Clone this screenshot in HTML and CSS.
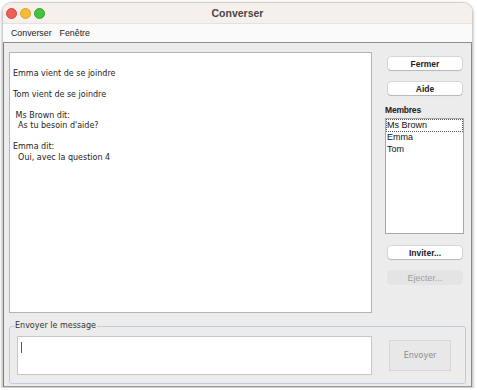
FILE: index.html
```html
<!DOCTYPE html>
<html lang="fr">
<head>
  <meta charset="UTF-8">
  <meta name="viewport" content="width=device-width, initial-scale=1.0">
  <title>Converser</title>
  <link rel="stylesheet" href="styles.css">
</head>
<body>
  <div class="window">
    <div class="titlebar">
      <div class="lights">
        <span class="light red"></span>
        <span class="light yellow"></span>
        <span class="light green"></span>
      </div>
      <div class="title">Converser</div>
    </div>
    <div class="menubar">
      <span class="menu">Converser</span>
      <span class="menu">Fenêtre</span>
    </div>
    <div class="content">
      <div class="main">
        <div class="chat">
<pre>

Emma vient de se joindre

Tom vient de se joindre

 Ms Brown dit:
  As tu besoin d'aide?

Emma dit:
  Oui, avec la question 4</pre>
        </div>
        <div class="side">
          <button class="btn">Fermer</button>
          <button class="btn">Aide</button>
          <div class="label">Membres</div>
          <ul class="members">
            <li class="focus">Ms Brown</li>
            <li>Emma</li>
            <li>Tom</li>
          </ul>
          <button class="btn">Inviter...</button>
          <button class="btn" disabled>Ejecter...</button>
        </div>
      </div>
      <fieldset class="compose">
        <legend>Envoyer le message</legend>
        <div class="input"><span class="caret"></span></div>
        <button class="send" disabled>Envoyer</button>
      </fieldset>
    </div>
  </div>
</body>
</html>
```

FILE: styles.css
```css
html, body{
  margin: 0;
  background: #fff;
}
.window{
  margin: 2px 4px 0 2px;
  width: 469px;
  border: 1px solid #cfcfcf;
  border-radius: 10px 10px 0 0;
  overflow: hidden;
  box-shadow: 0 1px 3px rgba(0,0,0,.35);
  font-family: "Liberation Sans", Arial, sans-serif;
}
.titlebar{
  height: 20px;
  background: #f6f0ed;
  border-bottom: 1px solid #e6e1de;
  display: flex;
  align-items: center;
  padding-left: 3px;
}
.lights{
  display: flex;
  gap: 3px;
}
.light{
  width: 11px;
  height: 11px;
  border-radius: 50%;
  box-sizing: border-box;
}
.red{ background: #ee5f57; border: .5px solid #d8463e; }
.yellow{ background: #f5bd36; border: .5px solid #dba12a; }
.green{ background: #45c23f; border: .5px solid #2fa62b; }
.title{
  flex: 1;
  text-align: center;
  font-weight: bold;
  font-size: 10.5px;
  color: #4b4646;
  margin-right: 42px;
}
.menubar{
  height: 18px;
  background: #fafafa;
  border-bottom: 1px solid #8d8d8d;
  display: flex;
  align-items: center;
  gap: 8px;
  padding-left: 8px;
  font-size: 8.8px;
  color: #1c1c1c;
}
.content{
  background: #ececec;
  border-left: 1px solid #7c7c7c;
  border-right: 1px solid #8a8a8a;
  border-bottom: 1px solid #9a9a9a;
  padding: 9px 6px 1px 5px;
  height: 333px;
}
.main{
  display: flex;
  gap: 13px;
}
.chat{
  box-sizing: border-box;
  width: 363px;
  height: 261px;
  background: #fff;
  border: 1px solid #b3b3b3;
  padding-left: 3px;
}
.chat pre{
  margin: 5px 0 0;
  font-family: "DejaVu Sans", Verdana, sans-serif;
  font-size: 8px;
  line-height: 10.5px;
  color: #1d1d1d;
}
.side{
  width: 79px;
  display: flex;
  flex-direction: column;
}
.btn{
  margin: 5px 2px 0 3px;
  width: 74px;
  height: 13px;
  padding: 0;
  border: none;
  border-radius: 3px;
  background: #fff;
  box-shadow: 0 0 0 .5px rgba(0,0,0,.18), 0 1px 1px rgba(0,0,0,.15);
  font-family: "Liberation Sans", Arial, sans-serif;
  font-size: 8.5px;
  font-weight: bold;
  color: #222;
}
.btn + .btn{
  margin-top: 12px;
}
.btn:disabled{
  background: #e4e4e4;
  color: #a0a0a0;
  font-weight: normal;
  font-size: 9px;
  box-shadow: 0 0 0 .5px rgba(0,0,0,.06);
}
.label{
  margin-top: 9px;
  line-height: 12px;
  font-size: 8.5px;
  font-weight: bold;
  color: #222;
  letter-spacing: -.2px;
}
.members{
  list-style: none;
  margin: 2px 0 12px;
  padding: 0;
  height: 114px;
  width: 77px;
  background: #fff;
  border: 1px solid #a8a8a8;
  font-size: 9px;
  line-height: 11.5px;
  color: #111;
}
.members li{
  padding-left: 1px;
  height: 11.5px;
}
.members .focus{
  outline: 1px dotted #555;
  outline-offset: -1px;
  height: 13px;
  line-height: 13px;
}
.members + .btn{
  margin-top: 0;
}
.compose{
  margin: 8px 0 0;
  padding: 5px 13px 8px 7px;
  border: 1px solid #bccde0;
  border-radius: 3px;
  display: flex;
  align-items: center;
  gap: 17px;
  width: 457px;
  box-sizing: border-box;
}
.compose legend{
  padding: 0 1px 0 0;
  margin-left: -2px;
  font-family: "DejaVu Sans", Verdana, sans-serif;
  font-size: 8px;
  line-height: 10px;
  color: #333;
}
.input{
  width: 355px;
  height: 39px;
  box-sizing: border-box;
  background: #fff;
  border: 1px solid #c6c6c6;
  padding: 5px 3px;
}
.caret{
  display: block;
  width: 1px;
  height: 11px;
  background: #555;
}
.send{
  width: 62px;
  height: 31px;
  padding: 0;
  background: #e8e8e8;
  border: 1px solid #d6d6d6;
  font-family: "DejaVu Sans", Verdana, sans-serif;
  font-size: 8px;
  color: #8c8c8c;
}
```
